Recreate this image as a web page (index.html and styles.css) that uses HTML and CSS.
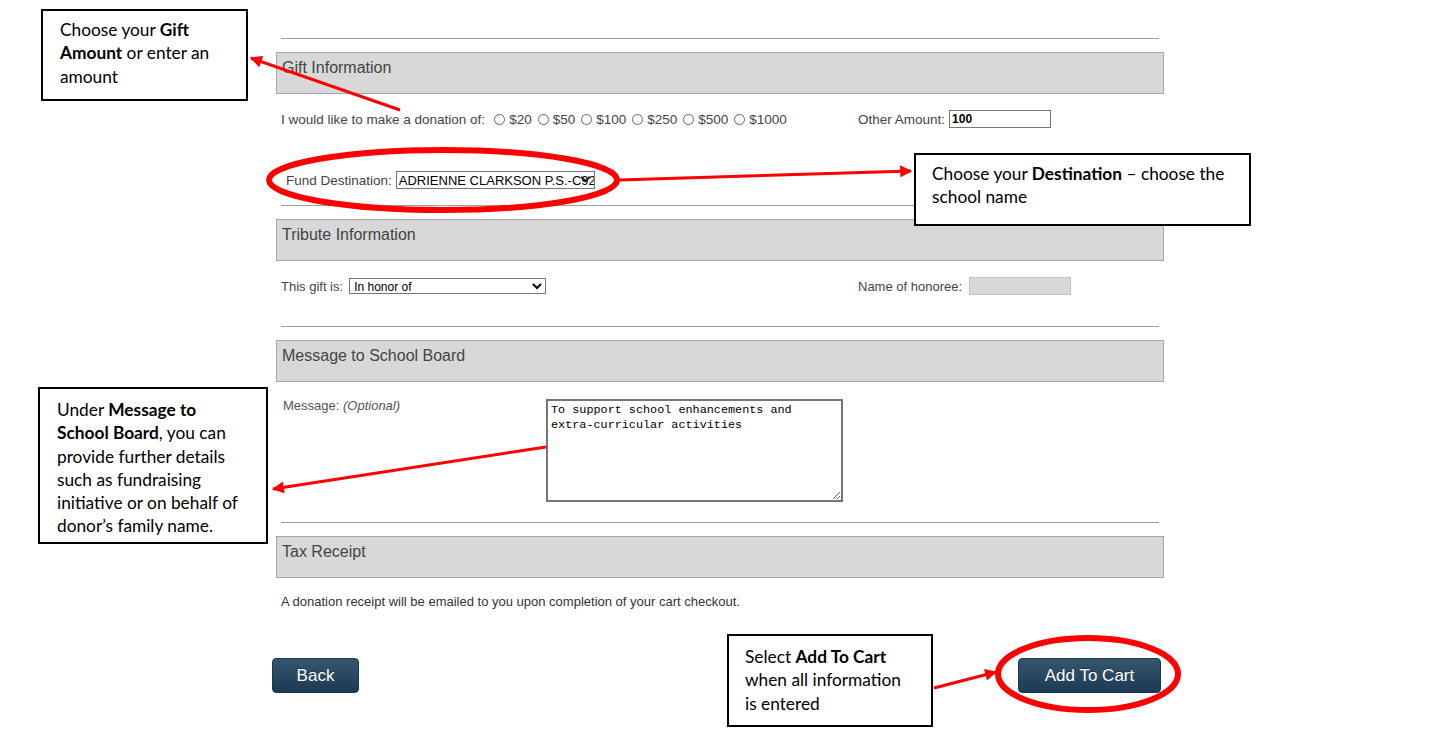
FILE: index.html
```html
<!DOCTYPE html>
<html lang="en">
<head>
    <meta charset="UTF-8">
    <meta name="viewport" content="width=device-width, initial-scale=1.0">
    <title>Make a Donation</title>
    <link rel="stylesheet" href="styles.css">
</head>
<body>
    <div class="donation">
        <hr class="rule">
        <h3 class="bar">Gift Information</h3>
        <div class="row amounts">
            <div class="cell">
                I would like to make a donation of:
                <label><input type="radio" name="amount">$20</label>
                <label><input type="radio" name="amount">$50</label>
                <label><input type="radio" name="amount">$100</label>
                <label><input type="radio" name="amount">$250</label>
                <label><input type="radio" name="amount">$500</label>
                <label><input type="radio" name="amount">$1000</label>
            </div>
            <div class="cell">
                Other Amount: <input type="text" class="other" value="100">
            </div>
        </div>
        <div class="row fund">
            <div class="cell">
                Fund Destination:
                <span class="select-wrap">
                    <select class="fund-select"><option>ADRIENNE CLARKSON P.S.-C92</option></select>
                </span>
            </div>
        </div>

        <hr class="rule rule-fund">
        <h3 class="bar">Tribute Information</h3>
        <div class="row tribute">
            <div class="cell">
                This gift is: <select class="gift-select"><option>In honor of</option></select>
            </div>
            <div class="cell">
                Name of honoree: <input type="text" class="honoree" disabled>
            </div>
        </div>

        <hr class="rule rule-tribute">
        <h3 class="bar">Message to School Board</h3>
        <div class="message">
            <div class="message-label">Message: <em>(Optional)</em></div>
            <textarea class="message-box">To support school enhancements and
extra-curricular activities</textarea>
        </div>

        <hr class="rule rule-message">
        <h3 class="bar">Tax Receipt</h3>
        <p class="receipt">A donation receipt will be emailed to you upon completion of your cart checkout.</p>

        <div class="actions">
            <button type="button" class="btn btn-back">Back</button>
            <button type="button" class="btn btn-cart">Add To Cart</button>
        </div>
    </div>

    <!-- help notes -->
    <div class="note note-amount">Choose your <b>Gift</b><br><b>Amount</b> or enter an<br>amount</div>
    <div class="note note-fund">Choose your <b>Destination</b> &ndash; choose the<br>school name</div>
    <div class="note note-message">Under <b>Message to</b><br><b>School Board</b>, you can<br>provide further details<br>such as fundraising<br>initiative or on behalf of<br>donor&rsquo;s family name.</div>
    <div class="note note-cart">Select <b>Add To Cart</b><br>when all information<br>is entered</div>

    <svg class="marks" width="1429" height="743" viewBox="0 0 1429 743">
        <defs>
            <marker id="head" viewBox="0 0 10 10" refX="9" refY="5" markerWidth="15" markerHeight="12" markerUnits="userSpaceOnUse" orient="auto">
                <path d="M0,0 L10,5 L0,10 z" fill="#f00"/>
            </marker>
        </defs>
        <g fill="none" stroke="#f00">
            <line x1="400" y1="110" x2="251" y2="58" stroke-width="3" marker-end="url(#head)"/>
            <ellipse cx="443" cy="180" rx="174" ry="30" stroke-width="6"/>
            <line x1="619" y1="180" x2="911" y2="171" stroke-width="3" marker-end="url(#head)"/>
            <line x1="546" y1="447" x2="273" y2="489" stroke-width="3" marker-end="url(#head)"/>
            <line x1="934" y1="688" x2="996" y2="672" stroke-width="3" marker-end="url(#head)"/>
            <ellipse cx="1088" cy="674" rx="90" ry="36" stroke-width="6"/>
        </g>
    </svg>
</body>
</html>
```

FILE: styles.css
```css
* {
    box-sizing: border-box;
}
body {
    margin: 0;
    background: #fff;
    font-family: "Liberation Sans", Arial, sans-serif;
    color: #444;
}
.donation {
    width: 888px;
    margin-left: 276px;
    padding-top: 38px;
}
.rule {
    height: 0;
    border: 0;
    border-top: 1px solid #a0a0a0;
    margin: 0 5px;
}
.bar {
    height: 42px;
    margin: 13px 0 0;
    padding: 6px 5px 5px;
    border: 1px solid #a6a6a6;
    background: #d8d8d8;
    font-size: 16px;
    font-weight: normal;
    line-height: 18px;
    color: #444;
}
.row {
    display: grid;
    grid-template-columns: 577px 1fr;
    align-items: center;
    padding-left: 5px;
    font-size: 13.5px;
}
.cell {
    display: flex;
    align-items: center;
    white-space: nowrap;
}
.amounts {
    margin-top: 16px;
    height: 18px;
}
.amounts label {
    display: inline-flex;
    align-items: center;
}
.amounts input[type="radio"] {
    appearance: none;
    width: 11px;
    height: 11px;
    margin: 0 4px 0 6px;
    border: 1px solid #666;
    border-radius: 50%;
    background: #fff;
}
.amounts label:first-child input {
    margin-left: 9px;
}
.other {
    width: 102px;
    height: 18px;
    margin-left: 4px;
    padding: 0 2px;
    border: 1px solid #767676;
    font-family: inherit;
    font-size: 12px;
    font-weight: bold;
    color: #000;
}
.fund {
    margin-top: 43px;
    padding-left: 10px;
    height: 18px;
}
.select-wrap {
    position: relative;
    display: inline-block;
    margin-left: 4px;
}
.select-wrap::after {
    content: "";
    position: absolute;
    right: 6px;
    top: 3px;
    width: 5px;
    height: 5px;
    border-right: 2px solid #222;
    border-bottom: 2px solid #222;
    transform: rotate(45deg);
    pointer-events: none;
}
.fund-select {
    display: block;
    appearance: none;
    width: 199px;
    height: 18px;
    padding: 0 0 0 2px;
    border: 1px solid #767676;
    border-radius: 0;
    background: #fff;
    font-family: inherit;
    font-size: 13px;
    color: #000;
}
.rule-fund {
    margin-top: 16px;
}
.tribute {
    margin-top: 16px;
    height: 18px;
    font-size: 13px;
}
.gift-select {
    width: 197px;
    height: 16px;
    margin-left: 6px;
    padding: 0;
    border: 1px solid #767676;
    border-radius: 0;
    background: #fff;
    font-family: inherit;
    font-size: 12px;
    color: #000;
}
.honoree {
    width: 102px;
    height: 18px;
    margin-left: 7px;
    border: 1px solid #c4c4c4;
    background: #d8d8d8;
}
.rule-tribute {
    margin-top: 31px;
}
.message {
    display: flex;
    margin-top: 17px;
    padding-left: 7px;
}
.message-label {
    width: 263px;
    font-size: 13px;
    line-height: 14px;
    color: #555;
}
.message-box {
    width: 297px;
    height: 103px;
    padding: 2px 3px;
    border: 2px solid #767676;
    resize: vertical;
    font-family: "Liberation Mono", "DejaVu Sans Mono", monospace;
    font-size: 11.8px;
    line-height: 15px;
    color: #000;
}
.rule-message {
    margin-top: 20px;
}
.receipt {
    margin: 16px 0 0;
    padding-left: 5px;
    font-size: 13px;
    line-height: 16px;
    color: #333;
}
.actions {
    display: flex;
    justify-content: space-between;
    margin: 48px 3px 0 -4px;
}
.btn {
    height: 35px;
    padding: 0;
    border: 1px solid #1b364f;
    border-radius: 4px;
    background: linear-gradient(#36566f, #1d3a55);
    font-family: inherit;
    font-size: 17px;
    color: #fff;
    text-shadow: 0 -1px 0 rgba(0, 0, 0, 0.3);
    cursor: pointer;
}
.btn-back {
    width: 87px;
}
.btn-cart {
    width: 143px;
}

/* help notes laid over the form */
.note {
    position: absolute;
    border: 2px solid #000;
    background: #fff;
    font-family: Lato, "Open Sans", sans-serif;
    font-size: 17.3px;
    line-height: 23.3px;
    color: #000;
}
.note-amount {
    left: 41px;
    top: 9px;
    width: 207px;
    height: 92px;
    padding: 7px 0 0 17px;
}
.note-fund {
    left: 914px;
    top: 153px;
    width: 337px;
    height: 73px;
    padding: 7px 0 0 16px;
}
.note-message {
    left: 38px;
    top: 387px;
    width: 230px;
    height: 157px;
    padding: 9px 0 0 17px;
}
.note-cart {
    left: 727px;
    top: 634px;
    width: 206px;
    height: 93px;
    padding: 9px 0 0 16px;
}
.marks {
    position: absolute;
    left: 0;
    top: 0;
    pointer-events: none;
}
```
